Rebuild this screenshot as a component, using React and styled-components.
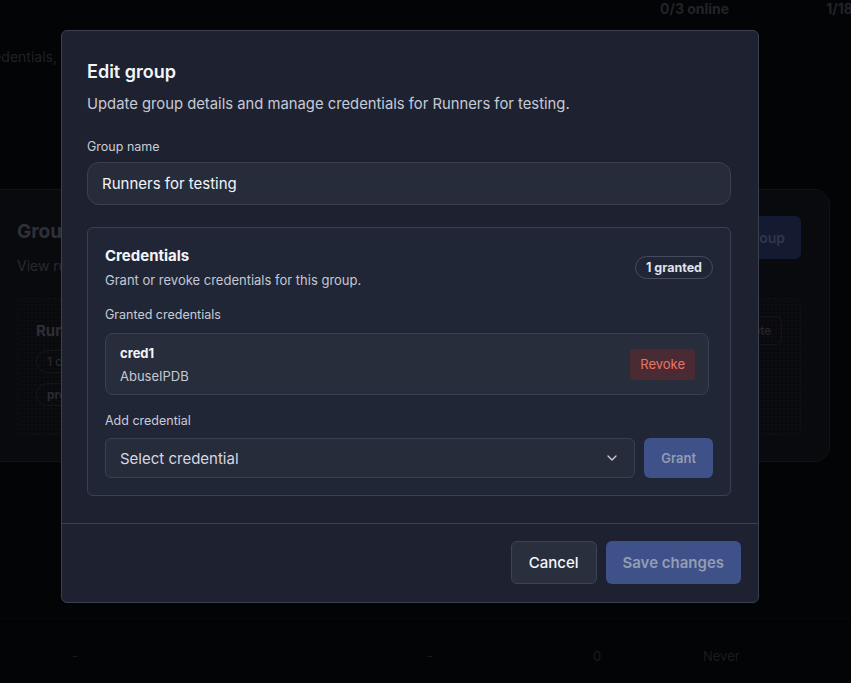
import React, { useState } from 'react';
import styled, { createGlobalStyle } from 'styled-components';

const GlobalStyle = createGlobalStyle`
    html, body {
        margin: 0;
        padding: 0;
        background: #08090c;
        font-family: Inter, "Noto Sans", "Liberation Sans", sans-serif;
        overflow: hidden;
    }
    * { box-sizing: border-box; }
`;

/* ---- page behind the dialog ---- */

const Page = styled.div`
    width: 851px;
    height: 683px;
    display: flex;
    flex-direction: column;
    overflow: hidden;
`;

const TopStats = styled.div`
    display: flex;
    gap: 97px;
    padding: 0 0 0 660px;
    height: 22px;
    font-size: 14px;
    font-weight: 700;
    color: #4a4e5e;
    white-space: nowrap;
`;

const Intro = styled.div`
    margin-top: 26px;
    width: 57px;
    display: flex;
    justify-content: flex-end;
    overflow: hidden;
    font-size: 14px;
    color: #45485a;
    white-space: nowrap;
`;

const GroupsCard = styled.div`
    margin: 124px 21px 0 0;
    height: 273px;
    border: 1px solid #25282f;
    border-left: none;
    border-radius: 0 16px 16px 0;
    background: #15171d;
    padding: 30px 28px 26px 17px;
    display: flex;
    flex-direction: column;
`;

const CardHead = styled.div`
    display: flex;
    justify-content: space-between;
    align-items: flex-start;
`;

const CardTitle = styled.div`
    font-size: 19px;
    font-weight: 700;
    color: #666b82;
`;

const CardSub = styled.div`
    margin-top: 14px;
    font-size: 14px;
    color: #575b6e;
`;

const CreateButton = styled.div`
    margin-top: -4px;
    height: 43px;
    padding: 0 16px;
    border-radius: 6px;
    background: #2c3a6e;
    color: #6c79a6;
    font-size: 14px;
    font-weight: 600;
    display: flex;
    align-items: center;
`;

const RunnerCard = styled.div`
    margin-top: 24px;
    flex: 1;
    border: 1px dashed #25282f;
    border-radius: 6px;
    padding: 22px 18px;
    display: flex;
    justify-content: space-between;
    background-image: radial-gradient(#1f2128 1px, transparent 1px);
    background-size: 4px 4px;
`;

const RunnerInfo = styled.div`
    display: flex;
    flex-direction: column;
    gap: 10px;
`;

const RunnerName = styled.div`
    font-size: 15px;
    font-weight: 700;
    color: #6a6675;
`;

const Pill = styled.div`
    align-self: flex-start;
    padding: 3px 10px;
    border: 1px solid #2e3038;
    border-radius: 999px;
    font-size: 12px;
    font-weight: ${p => p.bold ? 700 : 400};
    color: ${p => p.tone || '#5a5e70'};
`;

const DeletePill = styled.div`
    align-self: flex-start;
    margin-top: -5px;
    padding: 6px 10px;
    border: 1px solid #2e3038;
    border-radius: 6px;
    font-size: 12px;
    color: #6a5258;
`;

const TableRow = styled.div`
    margin-top: 156px;
    display: grid;
    grid-template-columns: 355px 166px 110px 1fr;
    align-items: center;
    font-size: 13px;
    color: #3a3d48;
    border-top: 1px dotted #1a1c22;
    padding: 29px 0 0 72px;
`;

/* ---- dialog ---- */

const Overlay = styled.div`
    position: fixed;
    inset: 0;
    background: rgba(0, 0, 0, 0.55);
`;

const Dialog = styled.div`
    position: fixed;
    top: 30px;
    left: 61px;
    width: 698px;
    background: #1e2230;
    border: 1px solid #3a3f50;
    border-radius: 6px;
    display: flex;
    flex-direction: column;
    color: #f2f4f8;
`;

const Body = styled.div`
    padding: 28px 27px 27px 25px;
    display: flex;
    flex-direction: column;
`;

const Title = styled.h2`
    margin: 0;
    font-size: 18px;
    font-weight: 600;
    line-height: 26px;
    color: #f4f5f8;
`;

const Description = styled.p`
    margin: 9px 0 0;
    font-size: 14.8px;
    line-height: 20px;
    color: #c6cad6;
`;

const Label = styled.label`
    display: block;
    font-size: 12.5px;
    line-height: 18px;
    color: #c9ccd6;
    margin-top: ${p => p.gap || 0}px;
`;

const TextInput = styled.input`
    margin-top: 6px;
    width: 100%;
    height: 43px;
    padding: 0 14px;
    border: 1px solid #3a4052;
    border-radius: 12px;
    background: #272c3b;
    color: #f2f4f8;
    font-family: inherit;
    font-size: 15px;
    outline: none;
`;

const Section = styled.section`
    margin-top: 22px;
    border: 1px solid #3a4052;
    border-radius: 6px;
    background: #212636;
    padding: 18px 17px 17px 17px;
`;

const SectionHead = styled.div`
    display: flex;
    justify-content: space-between;
    align-items: flex-start;
`;

const SectionTitle = styled.div`
    font-size: 15px;
    font-weight: 700;
    line-height: 20px;
    color: #f4f5f8;
`;

const SectionSub = styled.div`
    margin-top: 5px;
    font-size: 13px;
    line-height: 18px;
    color: #c4c8d3;
`;

const Badge = styled.span`
    margin-top: 10px;
    padding: 0 10px;
    height: 23px;
    display: inline-flex;
    align-items: center;
    border: 1px solid #454b5d;
    border-radius: 999px;
    font-size: 12.5px;
    font-weight: 700;
    color: #dfe2ea;
`;

const CredRow = styled.div`
    margin: 9px 4px 0 0;
    height: 62px;
    border: 1px solid #3a4052;
    border-radius: 8px;
    background: #282d3c;
    padding: 0 13px 0 14px;
    display: flex;
    align-items: center;
    justify-content: space-between;
`;

const CredName = styled.div`
    font-size: 13px;
    font-weight: 700;
    line-height: 18px;
    color: #f4f5f8;
`;

const CredType = styled.div`
    margin-top: 5px;
    font-size: 13px;
    line-height: 18px;
    color: #c6cad5;
`;

const RevokeButton = styled.button`
    height: 31px;
    padding: 0 10px;
    border: none;
    border-radius: 4px;
    background: #4a2b34;
    color: #ea7462;
    font-family: inherit;
    font-size: 13px;
`;

const AddRow = styled.div`
    margin-top: 8px;
    display: flex;
    gap: 9px;
`;

const Select = styled.div`
    flex: 1;
    height: 40px;
    border: 1px solid #3a4052;
    border-radius: 6px;
    background: #272c3b;
    padding: 0 14px;
    display: flex;
    align-items: center;
    justify-content: space-between;
    font-size: 15px;
    color: #d5d8e1;
`;

const PrimaryButton = styled.button`
    height: ${p => p.tall ? 43 : 40}px;
    padding: 0 17px;
    border: none;
    border-radius: 6px;
    background: #3f5189;
    color: #949cb2;
    font-family: inherit;
    font-size: ${p => p.tall ? 15 : 13}px;
    font-weight: 600;
`;

const Footer = styled.div`
    border-top: 1px solid #3a4052;
    padding: 17px 17px 18px;
    display: flex;
    justify-content: flex-end;
    gap: 9px;
`;

const GhostButton = styled.button`
    height: 43px;
    padding: 0 17px;
    border: 1px solid #3e4456;
    border-radius: 6px;
    background: #2a2f3e;
    color: #f6f7fa;
    font-family: inherit;
    font-size: 15px;
    font-weight: 500;
`;

const Chevron = () => (
    <svg width="16" height="16" viewBox="0 0 24 24" fill="none" stroke="#c9ccd6" strokeWidth="2" strokeLinecap="round" strokeLinejoin="round">
        <path d="m6 9 6 6 6-6" />
    </svg>
);

const App = () => {
    const [groupName, setGroupName] = useState('Runners for testing');

    return (
        <>
            <GlobalStyle />
            <Page>
                <TopStats>
                    <span>0/3 online</span>
                    <span>1/18</span>
                </TopStats>
                <Intro><span>Manage runner groups and their credentials,</span></Intro>
                <GroupsCard>
                    <CardHead>
                        <div>
                            <CardTitle>Groups</CardTitle>
                            <CardSub>View runner groups</CardSub>
                        </div>
                        <CreateButton>Create group</CreateButton>
                    </CardHead>
                    <RunnerCard>
                        <RunnerInfo>
                            <RunnerName>Runners for testing</RunnerName>
                            <Pill tone="#6a5a66">1 credential</Pill>
                            <Pill bold>prod</Pill>
                        </RunnerInfo>
                        <DeletePill>Delete</DeletePill>
                    </RunnerCard>
                </GroupsCard>
                <TableRow>
                    <span>-</span>
                    <span>-</span>
                    <span>0</span>
                    <span>Never</span>
                </TableRow>
            </Page>

            <Overlay />
            <Dialog>
                <Body>
                    <Title>Edit group</Title>
                    <Description>Update group details and manage credentials for Runners for testing.</Description>

                    <Label gap={24}>Group name</Label>
                    <TextInput value={groupName} onChange={(e) => setGroupName(e.target.value)} />

                    <Section>
                        <SectionHead>
                            <div>
                                <SectionTitle>Credentials</SectionTitle>
                                <SectionSub>Grant or revoke credentials for this group.</SectionSub>
                            </div>
                            <Badge>1 granted</Badge>
                        </SectionHead>

                        <Label gap={17}>Granted credentials</Label>
                        <CredRow>
                            <div>
                                <CredName>cred1</CredName>
                                <CredType>AbuseIPDB</CredType>
                            </div>
                            <RevokeButton>Revoke</RevokeButton>
                        </CredRow>

                        <Label gap={17}>Add credential</Label>
                        <AddRow>
                            <Select>
                                <span>Select credential</span>
                                <Chevron />
                            </Select>
                            <PrimaryButton>Grant</PrimaryButton>
                        </AddRow>
                    </Section>
                </Body>
                <Footer>
                    <GhostButton>Cancel</GhostButton>
                    <PrimaryButton tall>Save changes</PrimaryButton>
                </Footer>
            </Dialog>
        </>
    );
};

export default App;
